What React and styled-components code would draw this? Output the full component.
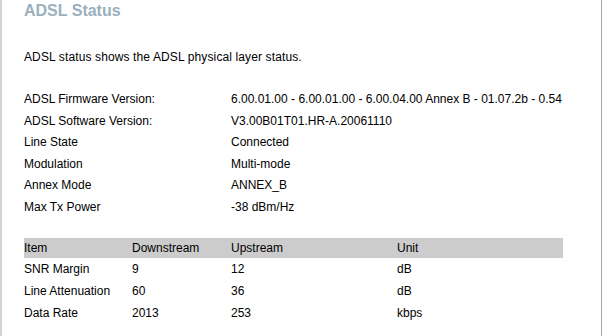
import React from 'react';
import styled, { createGlobalStyle } from 'styled-components';

const GlobalStyle = createGlobalStyle`
  html, body {
    margin: 0;
    padding: 0;
    background: #fff;
  }
`;

const Page = styled.div`
  box-sizing: border-box;
  width: 602px;
  height: 336px;
  overflow: hidden;
  border-left: 2px solid #d4d4d4;
  border-right: 1px solid #a8a8a8;
  padding-left: 22px;
  font-family: 'Liberation Sans', Arial, sans-serif;
  font-size: 12px;
  color: #000;
`;

const Title = styled.h1`
  margin: 0;
  height: 21px;
  line-height: 20px;
  padding-top: 1px;
  box-sizing: border-box;
  font-size: 16px;
  font-weight: bold;
  color: #9ab0be;
`;

const Intro = styled.p`
  margin: 26px 0 0;
  line-height: 21px;
  letter-spacing: 0.12px;
`;

const InfoList = styled.div`
  margin-top: 21px;
  display: grid;
  grid-template-columns: 207px 1fr;
  grid-auto-rows: 21.5px;
  align-items: center;
`;

const Cell = styled.div`
  line-height: ${(p) => p.$h || '21.5px'};
  white-space: nowrap;
`;

const StatsTable = styled.div`
  margin-top: 20px;
  width: 539px;
  display: grid;
  grid-template-columns: 108px 99px 166px 1fr;
`;

const HeadCell = styled.div`
  background: #cccccc;
  height: 20px;
  line-height: 20px;
  white-space: nowrap;
`;

const info = [
  ['ADSL Firmware Version:', '6.00.01.00 - 6.00.01.00 - 6.00.04.00 Annex B - 01.07.2b - 0.54'],
  ['ADSL Software Version:', 'V3.00B01T01.HR-A.20061110'],
  ['Line State', 'Connected'],
  ['Modulation', 'Multi-mode'],
  ['Annex Mode', 'ANNEX_B'],
  ['Max Tx Power', '-38 dBm/Hz']
];

const stats = [
  ['SNR Margin', '9', '12', 'dB'],
  ['Line Attenuation', '60', '36', 'dB'],
  ['Data Rate', '2013', '253', 'kbps']
];

const App = () => (
  <Page>
    <GlobalStyle />
    <Title>ADSL Status</Title>
    <Intro>ADSL status shows the ADSL physical layer status.</Intro>

    <InfoList>
      {info.map(([label, value]) => (
        <React.Fragment key={label}>
          <Cell>{label}</Cell>
          <Cell>{value}</Cell>
        </React.Fragment>
      ))}
    </InfoList>

    <StatsTable>
      {['Item', 'Downstream', 'Upstream', 'Unit'].map((h) => (
        <HeadCell key={h}>{h}</HeadCell>
      ))}
      {stats.map((row) =>
        row.map((v, i) => (
          <Cell key={row[0] + i} $h="22px">
            {v}
          </Cell>
        ))
      )}
    </StatsTable>
  </Page>
);

export default App;
